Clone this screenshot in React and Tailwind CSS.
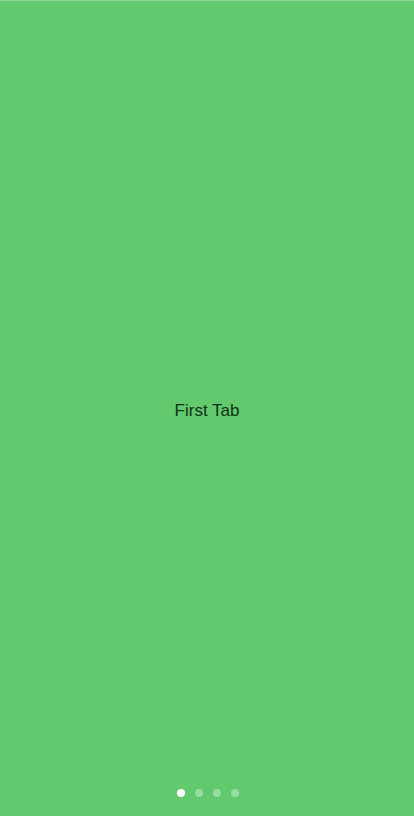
import React, { useState } from 'react';

const tabs = ["First Tab", "Second Tab", "Third Tab", "Fourth Tab"];

const App = () => {
  const [active, setActive] = useState(0);

  return (
    <div className="relative h-[816px] w-[414px] bg-[#63c96f] border-t border-[#8fd996] overflow-hidden" style={{ fontFamily: '"Liberation Sans", Arial, sans-serif' }}>
      <div className="flex h-full items-center justify-center pt-1">
        <p className="text-[17px] text-[#103214]">{tabs[active]}</p>
      </div>
      <div className="absolute bottom-[19px] left-0 right-0 flex justify-center gap-[10px] pl-[2px]">
        {tabs.map((t, i) => (
          <button
            key={t}
            onClick={() => setActive(i)}
            className={i === active ? "h-2 w-2 rounded-full bg-white" : "h-2 w-2 rounded-full bg-white/35"}
          />
        ))}
      </div>
    </div>
  );
};

export default App;
